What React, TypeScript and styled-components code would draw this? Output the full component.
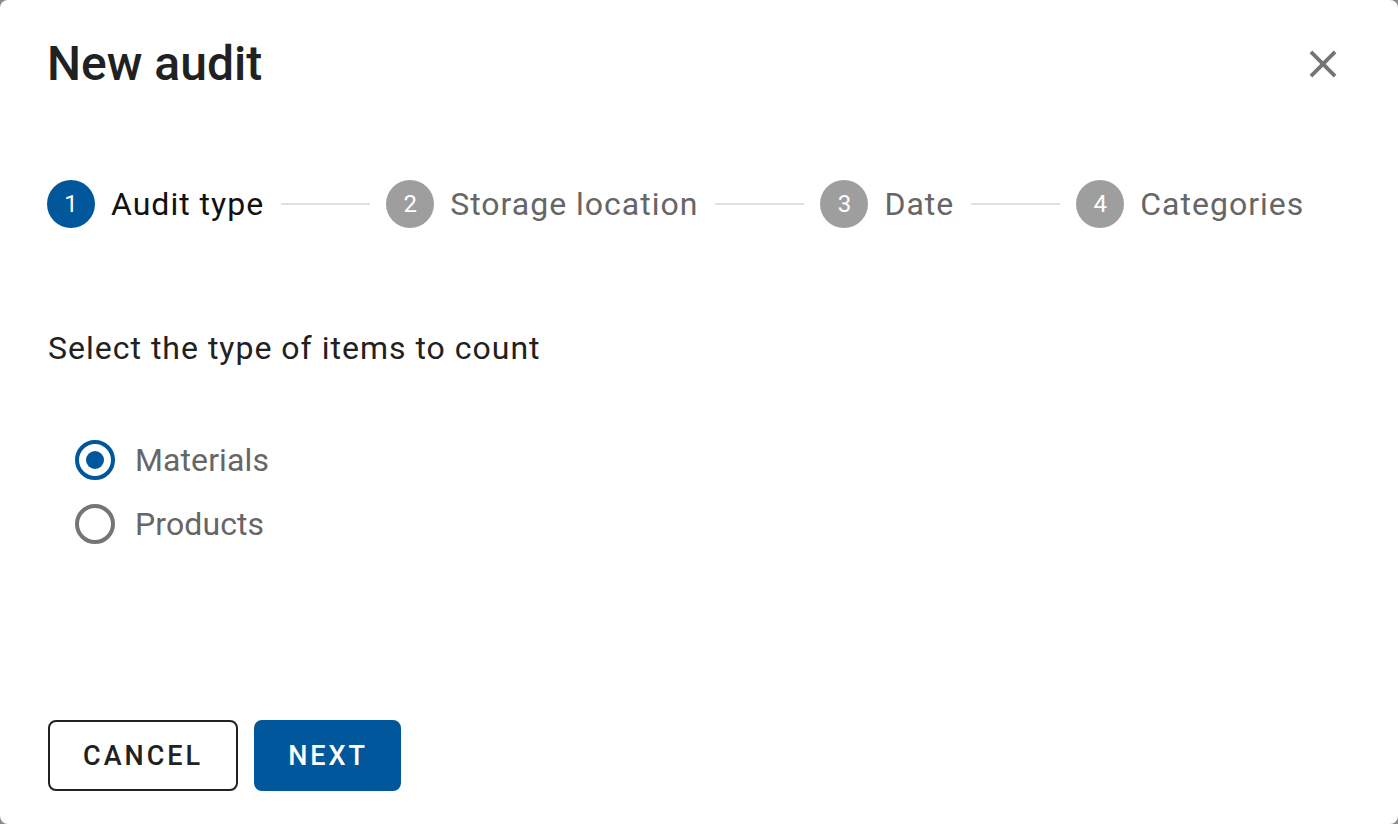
import React, { useState } from "react";
import styled, { createGlobalStyle } from "styled-components";

const PRIMARY = "#01579b";
const GREY = "#9e9e9e";
const TEXT = "#212121";
const SUB = "#666666";

const Global = createGlobalStyle`
  html, body { margin: 0; padding: 0; background: #8a8a8a; }
  body { font-family: Roboto, "Noto Sans", Arial, sans-serif; }
  * { box-sizing: border-box; }
`;

const Dialog = styled.div`
  width: 1398px;
  height: 824px;
  background: #fff;
  border-radius: 8px;
  display: flex;
  flex-direction: column;
  padding: 36px 48px 33px 48px;
`;

const Header = styled.div`
  display: flex;
  align-items: center;
  justify-content: space-between;
  height: 56px;
`;

const Title = styled.h2`
  margin: 0 0 0 -1px;
  font-size: 48px;
  font-weight: 500;
  color: ${TEXT};
  line-height: 56px;
`;

const CloseButton = styled.button`
  border: 0;
  background: none;
  padding: 0;
  margin-right: 4px;
  width: 46px;
  height: 46px;
  display: flex;
  align-items: center;
  justify-content: center;
  cursor: pointer;
  color: #757575;
`;

const Stepper = styled.div`
  display: flex;
  align-items: center;
  margin-top: 88px;
  height: 48px;
  margin-left: -1px;
`;

const Step = styled.div`
  display: flex;
  align-items: center;
  gap: 16px;
`;

const StepIcon = styled.div<{ $active?: boolean }>`
  width: 48px;
  height: 48px;
  border-radius: 50%;
  background: ${(p) => (p.$active ? PRIMARY : GREY)};
  color: #fff;
  font-size: 24px;
  display: flex;
  align-items: center;
  justify-content: center;
`;

const StepLabel = styled.span<{ $active?: boolean }>`
  font-size: 32px;
  letter-spacing: 1px;
  color: ${(p) => (p.$active ? "#111" : SUB)};
`;

const Connector = styled.div`
  width: 89px;
  height: 2px;
  background: #e0e0e0;
  margin: 0 16px 0 17px;
`;

const Prompt = styled.p`
  margin: 100px 0 0 0;
  font-size: 32px;
  line-height: 40px;
  letter-spacing: 1px;
  color: ${TEXT};
`;

const RadioGroup = styled.div`
  margin-top: 60px;
  display: flex;
  flex-direction: column;
  padding-left: 27px;
`;

const RadioRow = styled.label`
  display: flex;
  align-items: center;
  height: 64px;
  gap: 20px;
  cursor: pointer;
`;

const RadioCircle = styled.span<{ $checked?: boolean }>`
  width: 40px;
  height: 40px;
  border-radius: 50%;
  border: 4px solid ${(p) => (p.$checked ? PRIMARY : "#757575")};
  display: flex;
  align-items: center;
  justify-content: center;
  &::after {
    content: "";
    width: 18px;
    height: 18px;
    border-radius: 50%;
    background: ${PRIMARY};
    display: ${(p) => (p.$checked ? "block" : "none")};
  }
`;

const RadioLabel = styled.span`
  font-size: 32px;
  color: ${SUB};
  letter-spacing: 0.1px;
`;

const Actions = styled.div`
  margin-top: auto;
  display: flex;
  gap: 16px;
`;

const Button = styled.button<{ $variant: "outlined" | "contained" }>`
  height: 71px;
  padding: ${(p) => (p.$variant === "outlined" ? "0 33px" : "0 31px 0 32px")};
  border-radius: 8px;
  font-family: Roboto, Arial, sans-serif;
  font-size: 27px;
  font-weight: 500;
  letter-spacing: 3px;
  text-transform: uppercase;
  cursor: pointer;
  border: 2px solid ${(p) => (p.$variant === "outlined" ? TEXT : PRIMARY)};
  background: ${(p) => (p.$variant === "outlined" ? "#fff" : PRIMARY)};
  color: ${(p) => (p.$variant === "outlined" ? TEXT : "#fff")};
`;

const steps = ["Audit type", "Storage location", "Date", "Categories"];
const options = ["Materials", "Products"];

export default function App() {
  const [value, setValue] = useState("Materials");
  return (
    <>
      <Global />
      <Dialog>
        <Header>
          <Title>New audit</Title>
          <CloseButton aria-label="close">
            <svg width="46" height="46" viewBox="0 0 24 24" fill="currentColor">
              <path d="M19 6.41 17.59 5 12 10.59 6.41 5 5 6.41 10.59 12 5 17.59 6.41 19 12 13.41 17.59 19 19 17.59 13.41 12z" />
            </svg>
          </CloseButton>
        </Header>

        <Stepper>
          {steps.map((s, i) => (
            <React.Fragment key={s}>
              {i > 0 && <Connector />}
              <Step>
                <StepIcon $active={i === 0}>{i + 1}</StepIcon>
                <StepLabel $active={i === 0}>{s}</StepLabel>
              </Step>
            </React.Fragment>
          ))}
        </Stepper>

        <Prompt>Select the type of items to count</Prompt>

        <RadioGroup>
          {options.map((o) => (
            <RadioRow key={o} onClick={() => setValue(o)}>
              <RadioCircle $checked={value === o} />
              <RadioLabel>{o}</RadioLabel>
            </RadioRow>
          ))}
        </RadioGroup>

        <Actions>
          <Button $variant="outlined">Cancel</Button>
          <Button $variant="contained">Next</Button>
        </Actions>
      </Dialog>
    </>
  );
}
